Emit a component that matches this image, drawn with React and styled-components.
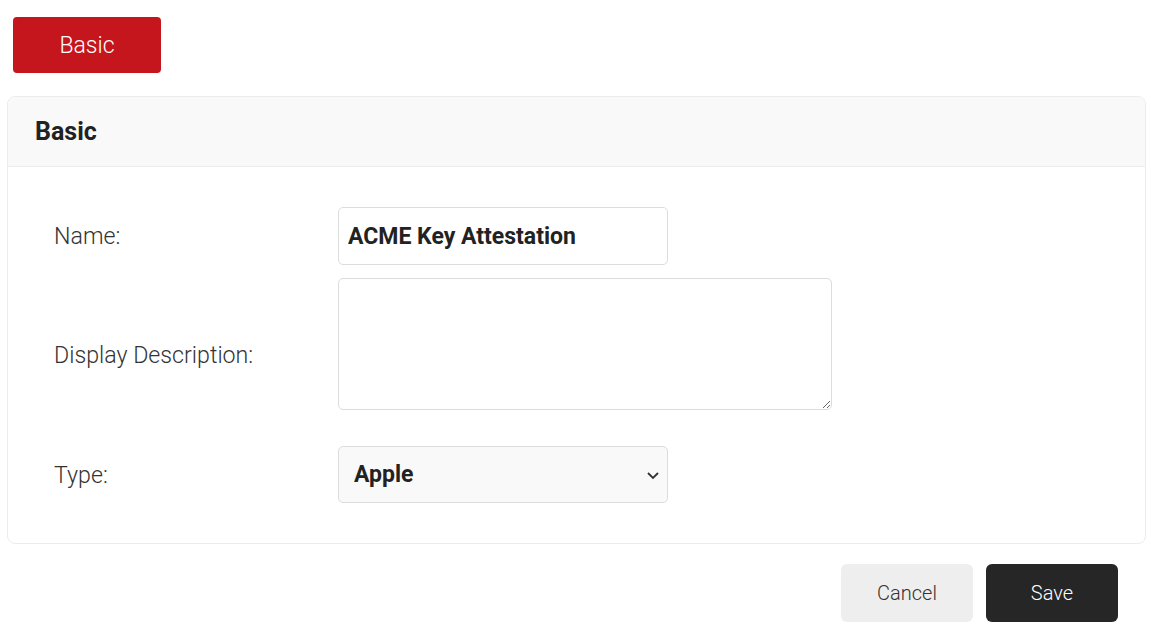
import styled, { createGlobalStyle } from "styled-components";

const GlobalStyle = createGlobalStyle`
  body {
    margin: 0;
    background: #fff;
    font-family: Roboto, "Liberation Sans", sans-serif;
    color: #333;
  }
`;

const Page = styled.div`
  padding: 17px 5px 0 7px;
`;

const TabBar = styled.div`
  display: flex;
  padding-left: 6px;
  margin-bottom: 23px;
`;

const TabButton = styled.button`
  width: 148px;
  height: 56px;
  border: none;
  border-radius: 4px;
  background: #c4161c;
  color: #fff;
  font-family: inherit;
  font-size: 23px;
  font-weight: 300;
  cursor: pointer;
`;

const Card = styled.section`
  border: 1px solid #ececec;
  border-radius: 8px;
  overflow: hidden;
`;

const CardHeader = styled.header`
  height: 69px;
  display: flex;
  align-items: center;
  padding: 0 27px;
  background: #f9f9f9;
  border-bottom: 1px solid #ececec;
`;

const CardTitle = styled.h2`
  margin: 0;
  font-size: 25px;
  font-weight: 700;
  color: #222;
`;

const CardBody = styled.div`
  padding: 40px 46px 40px 46px;
`;

const Row = styled.div`
  display: grid;
  grid-template-columns: 284px auto;
  align-items: center;
  margin-bottom: ${(p) => p.$gap || 0}px;
`;

const Label = styled.label`
  font-size: 23.2px;
  font-weight: 300;
  color: #333;
  padding-top: ${(p) => p.$drop || 0}px;
`;

const TextInput = styled.input`
  box-sizing: border-box;
  width: 330px;
  height: 58px;
  padding: 0 9px;
  border: 1px solid #dcdcdc;
  border-radius: 5px;
  font-family: inherit;
  font-size: 23px;
  font-weight: 700;
  color: #222;
  outline: none;
`;

const TextArea = styled.textarea`
  box-sizing: border-box;
  width: 494px;
  height: 132px;
  border: 1px solid #dcdcdc;
  border-radius: 5px;
  font-family: inherit;
  outline: none;
  display: block;
`;

const SelectWrap = styled.div`
  position: relative;
  width: 330px;
`;

const Select = styled.select`
  box-sizing: border-box;
  width: 330px;
  height: 57px;
  padding: 0 15px;
  border: 1px solid #dcdcdc;
  border-radius: 5px;
  background: #f9f9f9;
  appearance: none;
  font-family: inherit;
  font-size: 23px;
  font-weight: 700;
  color: #222;
  outline: none;
`;

const Chevron = styled.svg`
  position: absolute;
  right: 6px;
  top: 50%;
  transform: translateY(-50%);
  pointer-events: none;
`;

const Actions = styled.div`
  display: flex;
  justify-content: flex-end;
  gap: 13px;
  margin-top: 20px;
  padding-right: 28px;
`;

const ActionButton = styled.button`
  width: 132px;
  height: 58px;
  border: none;
  border-radius: 6px;
  background: ${(p) => (p.$primary ? "#262626" : "#eeeeee")};
  color: ${(p) => (p.$primary ? "#fff" : "#333")};
  font-family: inherit;
  font-size: 20px;
  font-weight: 300;
  cursor: pointer;
`;

export default function App() {
  return (
    <>
      <GlobalStyle />
      <Page>
        <TabBar>
          <TabButton>Basic</TabButton>
        </TabBar>
        <Card>
          <CardHeader>
            <CardTitle>Basic</CardTitle>
          </CardHeader>
          <CardBody>
            <Row $gap={13}>
              <Label>Name:</Label>
              <TextInput defaultValue="ACME Key Attestation" />
            </Row>
            <Row $gap={36}>
              <Label $drop={22}>Display Description:</Label>
              <TextArea />
            </Row>
            <Row>
              <Label>Type:</Label>
              <SelectWrap>
                <Select defaultValue="apple">
                  <option value="apple">Apple</option>
                </Select>
                <Chevron width="18" height="18" viewBox="0 0 18 18">
                  <path d="M4 7l5 5 5-5" fill="none" stroke="#333" strokeWidth="1.8" />
                </Chevron>
              </SelectWrap>
            </Row>
          </CardBody>
        </Card>
        <Actions>
          <ActionButton>Cancel</ActionButton>
          <ActionButton $primary>Save</ActionButton>
        </Actions>
      </Page>
    </>
  );
}
